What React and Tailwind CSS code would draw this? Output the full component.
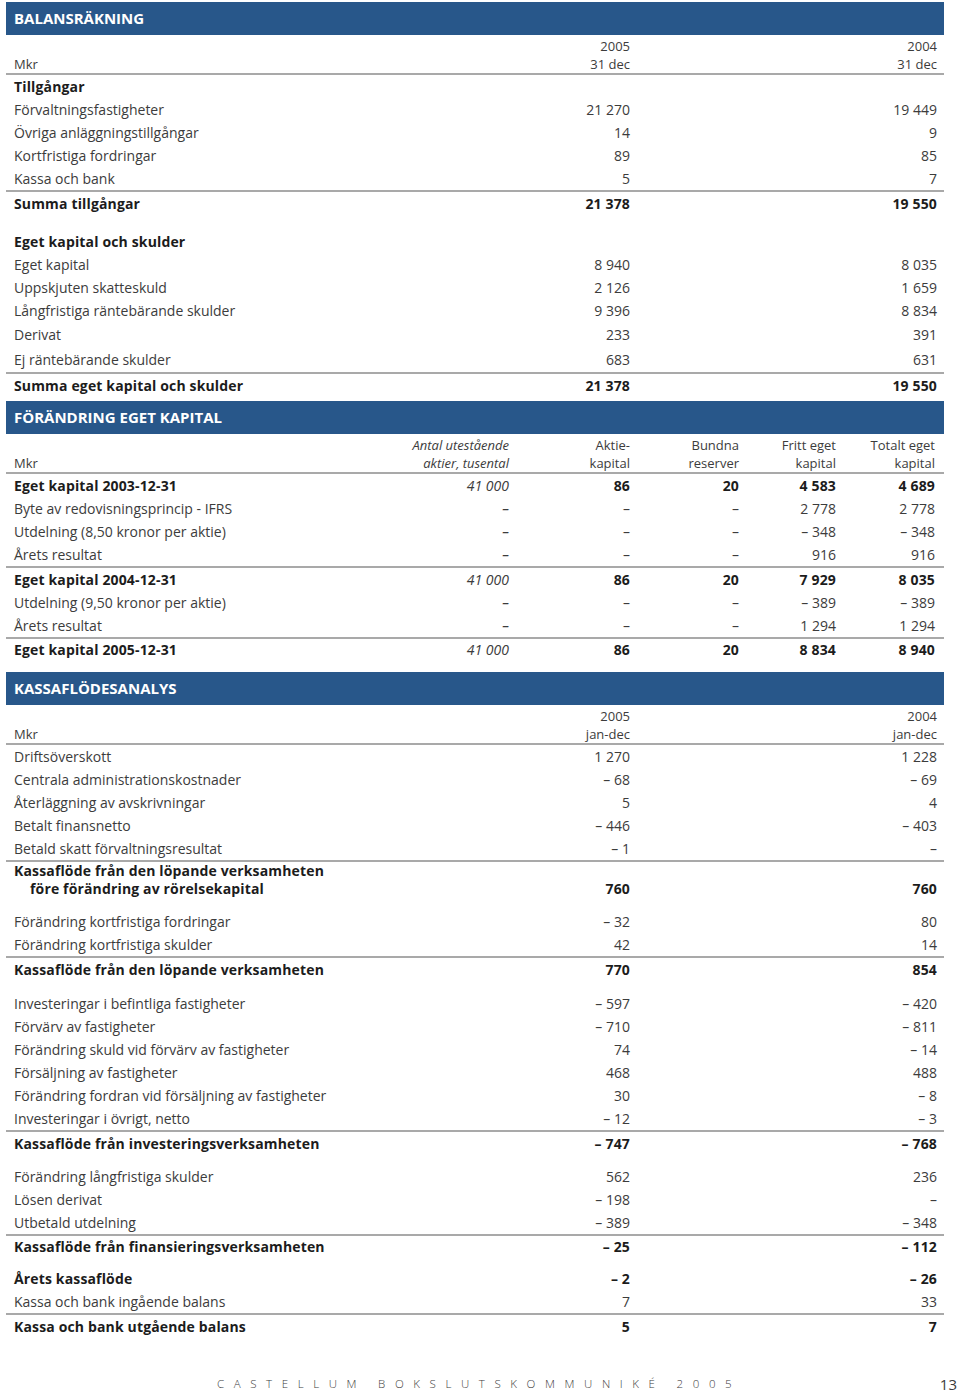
import React from "react";

const balans = [
  { t: "Tillgångar", b: true },
  { t: "Förvaltningsfastigheter", a: "21 270", c: "19 449" },
  { t: "Övriga anläggningstillgångar", a: "14", c: "9" },
  { t: "Kortfristiga fordringar", a: "89", c: "85" },
  { t: "Kassa och bank", a: "5", c: "7" },
  { t: "Summa tillgångar", a: "21 378", c: "19 550", b: true, line: true },
  { gap: 15 },
  { t: "Eget kapital och skulder", b: true },
  { t: "Eget kapital", a: "8 940", c: "8 035" },
  { t: "Uppskjuten skatteskuld", a: "2 126", c: "1 659" },
  { t: "Långfristiga räntebärande skulder", a: "9 396", c: "8 834" },
  { t: "Derivat", a: "233", c: "391", h: 24 },
  { t: "Ej räntebärande skulder", a: "683", c: "631", h: 26 },
  { t: "Summa eget kapital och skulder", a: "21 378", c: "19 550", b: true, line: true },
];

const forandring = [
  { t: "Eget kapital 2003-12-31", v: ["41 000", "86", "20", "4 583", "4 689"], b: true },
  { t: "Byte av redovisningsprincip - IFRS", v: ["–", "–", "–", "2 778", "2 778"] },
  { t: "Utdelning (8,50 kronor per aktie)", v: ["–", "–", "–", "– 348", "– 348"] },
  { t: "Årets resultat", v: ["–", "–", "–", "916", "916"] },
  { t: "Eget kapital 2004-12-31", v: ["41 000", "86", "20", "7 929", "8 035"], b: true, line: true },
  { t: "Utdelning (9,50 kronor per aktie)", v: ["–", "–", "–", "– 389", "– 389"] },
  { t: "Årets resultat", v: ["–", "–", "–", "1 294", "1 294"] },
  { t: "Eget kapital 2005-12-31", v: ["41 000", "86", "20", "8 834", "8 940"], b: true, line: true, h: 21 },
];

const kassa = [
  { t: "Driftsöverskott", a: "1 270", c: "1 228" },
  { t: "Centrala administrationskostnader", a: "– 68", c: "– 69" },
  { t: "Återläggning av avskrivningar", a: "5", c: "4" },
  { t: "Betalt finansnetto", a: "– 446", c: "– 403" },
  { t: "Betald skatt förvaltningsresultat", a: "– 1", c: "–" },
  { two: true, t: "Kassaflöde från den löpande verksamheten", t2: "före förändring av rörelsekapital", a: "760", c: "760", line: true },
  { t: "Förändring kortfristiga fordringar", a: "– 32", c: "80" },
  { t: "Förändring kortfristiga skulder", a: "42", c: "14" },
  { t: "Kassaflöde från den löpande verksamheten", a: "770", c: "854", b: true, line: true },
  { gap: 11 },
  { t: "Investeringar i befintliga fastigheter", a: "– 597", c: "– 420" },
  { t: "Förvärv av fastigheter", a: "– 710", c: "– 811" },
  { t: "Förändring skuld vid förvärv av fastigheter", a: "74", c: "– 14" },
  { t: "Försäljning av fastigheter", a: "468", c: "488" },
  { t: "Förändring fordran vid försäljning av fastigheter", a: "30", c: "– 8" },
  { t: "Investeringar i övrigt, netto", a: "– 12", c: "– 3" },
  { t: "Kassaflöde från investeringsverksamheten", a: "– 747", c: "– 768", b: true, line: true },
  { gap: 10 },
  { t: "Förändring långfristiga skulder", a: "562", c: "236" },
  { t: "Lösen derivat", a: "– 198", c: "–" },
  { t: "Utbetald utdelning", a: "– 389", c: "– 348" },
  { t: "Kassaflöde från finansieringsverksamheten", a: "– 25", c: "– 112", b: true, line: true, h: 21 },
  { gap: 10 },
  { t: "Årets kassaflöde", a: "– 2", c: "– 26", b: true },
  { t: "Kassa och bank ingående balans", a: "7", c: "33" },
  { t: "Kassa och bank utgående balans", a: "5", c: "7", b: true, line: true },
];

const BOLD = "font-bold tracking-[0.15px] text-[#1c1c1c]";
const NORMAL = "text-[#3c3c3c]";

function Bar({ title }) {
  return (
    <div className="h-[33px] bg-[#28578a] flex items-center pl-2 text-white font-bold text-[15px]">
      {title}
    </div>
  );
}

function TwoColRows({ rows }) {
  return rows.map((r, i) => {
    if (r.gap) return <div key={i} style={{ height: r.gap }} />;
    const weight = r.b || r.two ? BOLD : NORMAL;
    if (r.two) {
      return (
        <div
          key={i}
          className={`grid grid-cols-[1fr_120px_307px] pl-2 pr-[7px] pb-[12px] leading-[18px] border-t-2 border-[#a9a9a9] ${weight}`}
        >
          <div>
            <div>{r.t}</div>
            <div className="pl-4">{r.t2}</div>
          </div>
          <div className="text-right self-end">{r.a}</div>
          <div className="text-right self-end">{r.c}</div>
        </div>
      );
    }
    // raden med linje får 2px extra så att texten hamnar rätt
    const h = (r.h || 23) + (r.line ? 2 : 0);
    return (
      <div
        key={i}
        style={{ height: h }}
        className={`grid grid-cols-[1fr_120px_307px] items-center pl-2 pr-[7px] ${r.line ? "border-t-2 border-[#a9a9a9]" : ""} ${weight}`}
      >
        <div>{r.t}</div>
        <div className="text-right">{r.a}</div>
        <div className="text-right">{r.c}</div>
      </div>
    );
  });
}

function YearHead({ a1, a2, c1, c2 }) {
  return (
    <div className="grid grid-cols-[1fr_120px_307px] pl-2 pr-[7px] pt-[2px] leading-[18px] text-[13px] text-[#3c3c3c]">
      <div className="self-end">Mkr</div>
      <div className="text-right">
        <div>{a1}</div>
        <div>{a2}</div>
      </div>
      <div className="text-right">
        <div>{c1}</div>
        <div>{c2}</div>
      </div>
    </div>
  );
}

export default function App() {
  return (
    <div className="w-[960px] h-[1393px] bg-white pt-[2px] overflow-hidden text-[14px] font-['Open_Sans',sans-serif]">
      <div className="ml-[6px] w-[938px]">
        {/* Balansräkning */}
        <Bar title="BALANSRÄKNING" />
        <YearHead a1="2005" a2="31 dec" c1="2004" c2="31 dec" />
        <div className="border-t-2 border-[#a9a9a9]">
          <TwoColRows rows={balans} />
        </div>

        {/* Förändring eget kapital */}
        <div className="mt-[4px]">
          <Bar title="FÖRÄNDRING EGET KAPITAL" />
        </div>
        <div className="grid grid-cols-[1fr_140px_121px_109px_97px_99px] pl-2 pr-[9px] pt-[2px] leading-[18px] text-[13px] text-[#3c3c3c]">
          <div className="self-end">Mkr</div>
          <div className="text-right italic">
            <div>Antal utestående</div>
            <div>aktier, tusental</div>
          </div>
          <div className="text-right">
            <div>Aktie-</div>
            <div>kapital</div>
          </div>
          <div className="text-right">
            <div>Bundna</div>
            <div>reserver</div>
          </div>
          <div className="text-right">
            <div>Fritt eget</div>
            <div>kapital</div>
          </div>
          <div className="text-right">
            <div>Totalt eget</div>
            <div>kapital</div>
          </div>
        </div>
        <div className="border-t-2 border-[#a9a9a9]">
          {forandring.map((r, i) => (
            <div
              key={i}
              style={{ height: (r.h || 23) + (r.line ? 2 : 0) }}
              className={`grid grid-cols-[1fr_140px_121px_109px_97px_99px] items-center pl-2 pr-[9px] ${r.line ? "border-t-2 border-[#a9a9a9]" : ""} ${r.b ? BOLD : NORMAL}`}
            >
              <div>{r.t}</div>
              {r.v.map((v, j) => (
                <div key={j} className={`text-right ${j === 0 ? "italic font-normal tracking-normal text-[#3c3c3c]" : ""}`}>
                  {v}
                </div>
              ))}
            </div>
          ))}
        </div>

        {/* Kassaflödesanalys */}
        <div className="mt-[12px]">
          <Bar title="KASSAFLÖDESANALYS" />
        </div>
        <YearHead a1="2005" a2="jan-dec" c1="2004" c2="jan-dec" />
        <div className="border-t-2 border-[#a9a9a9]">
          <TwoColRows rows={kassa} />
        </div>
      </div>

      {/* Sidfot */}
      <div className="mt-[36px] flex items-center h-[20px] pl-[217px] text-[#3c3c3c]">
        <div className="flex-1 text-[11.5px] tracking-[9.6px] font-light">
          CASTELLUM<span className="inline-block w-[12px]" />BOKSLUTSKOMMUNIKÉ<span className="inline-block w-[12px]" />2005
        </div>
        <div className="text-[15px] pr-[3px]">13</div>
      </div>
    </div>
  );
}
